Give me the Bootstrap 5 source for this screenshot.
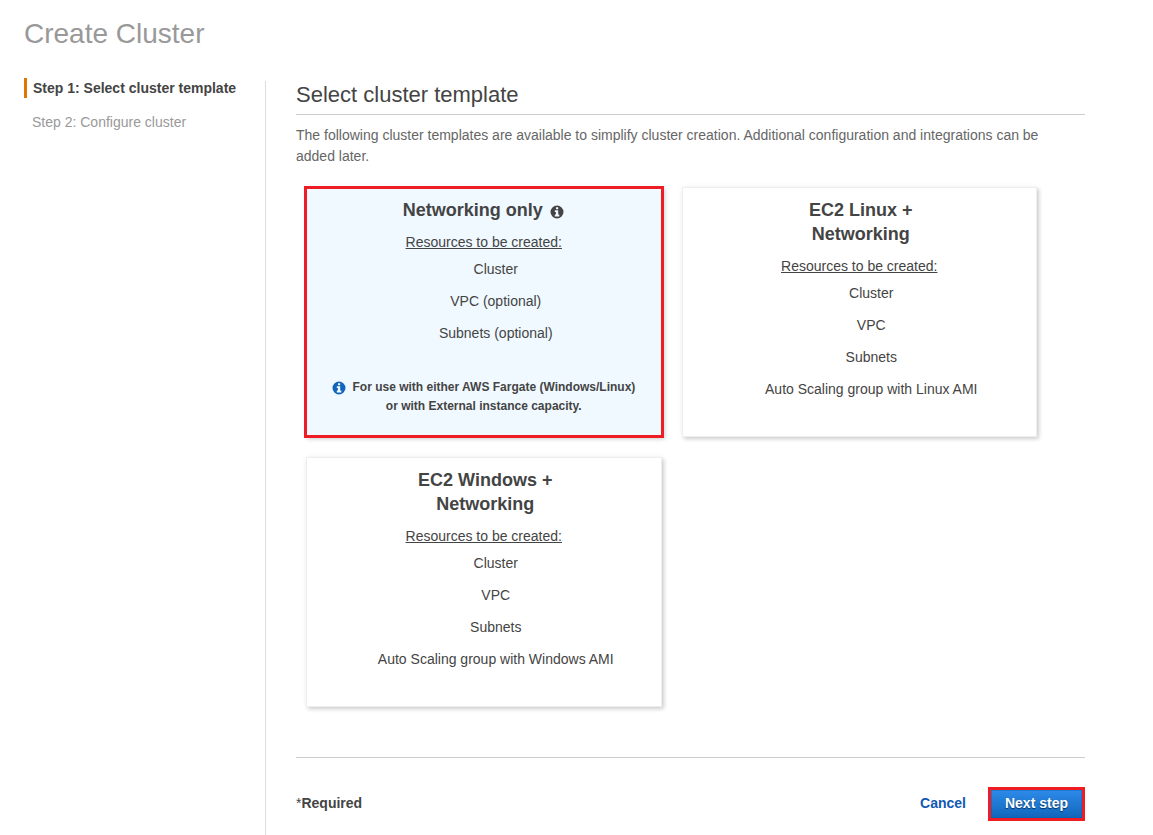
<!DOCTYPE html>
<html lang="en">
<head>
<meta charset="utf-8">
<meta name="viewport" content="width=device-width, initial-scale=1">
<title>Create Cluster</title>
<link href="https://cdn.jsdelivr.net/npm/bootstrap@5.3.0/dist/css/bootstrap.min.css" rel="stylesheet">
<style>
body { font-family: "Liberation Sans", Arial, sans-serif; font-size: 14px; line-height: 20px; color: #444; background: #fff; }
.page-title { font-size: 28px; line-height: 34px; color: #999; margin: 17px 24px 27px; font-weight: 400; }
.wizard { padding-left: 24px; }
.steps { width: 241px; flex: none; gap: 14px; }
.steps a { color: #999; text-decoration: none; padding-left: 8px; display: block; }
.steps a.current { color: #444; font-weight: 700; border-left: 3px solid #e07700; padding-left: 6px; }
.step-panel { border-left: 1px solid #ddd; margin-top: 3px; padding: 0 68px 14px 30px; }
.panel-title { font-size: 22px; line-height: 28px; font-weight: 400; margin: 0; padding-bottom: 5px; border-bottom: 1px solid #ccc; }
.intro { color: #666; line-height: 21px; margin: 10px 0 20px; padding-right: 20px; }
.templates { display: grid; grid-template-columns: 1fr 1fr; gap: 20px; padding: 0 48px 0 10px; }
.template { border: 1px solid #eee; min-height: 250px; padding: 10px 20px; box-shadow: 2px 2px 4px rgba(0,0,0,.18), 0 0 8px rgba(0,0,0,.04); cursor: pointer; background: #fff; }
.btn-check:checked + .template { background: #f0f9ff; border-color: #f0f9ff; outline: 3px solid #ee1c25; outline-offset: -2px; margin: 0 -1px; }
.template-name { font-size: 18px; line-height: 24px; font-weight: 700; padding-left: 3px; margin-bottom: 10px; }
.template-name .info { margin: 0 4px 0 2px; }
.template ul { margin: 1px 0 0; line-height: 32px; }
.template-note { font-size: 12px; line-height: 19px; font-weight: 700; margin-top: 29px; }
.info { width: 14px; height: 14px; vertical-align: -3px; }
.template-note .info { color: #1166bb; margin-right: 3px; vertical-align: -4px; }
.actions { border-top: 1px solid #ccc; margin-top: 50px; padding-top: 29px; font-weight: 700; gap: 22px; }
.actions > :not(button) { padding-bottom: 2px; }
.cancel { color: #1159b3; text-decoration: none; }
.next-step { border: 3px solid #ee1c25; border-radius: 0; padding: 3px 14px 5px; font-size: 14px; line-height: 20px; font-weight: 700; color: #fff; background: linear-gradient(#2d8bea, #1166bb) padding-box; text-shadow: 0 1px 1px #052f5a; box-shadow: inset 0 0 0 1px rgba(10,90,170,.35); }
.next-step:hover { color: #fff; background: #1166bb; border-color: #ee1c25; }
</style>
</head>
<body>
<svg class="d-none" xmlns="http://www.w3.org/2000/svg">
  <symbol id="info-circle" viewBox="0 0 14 14">
    <path fill="currentColor" fill-rule="evenodd" d="M7 .5a6.5 6.5 0 1 0 0 13 6.5 6.5 0 0 0 0-13ZM6 2.2h2.2v2H6ZM4.8 5.2h3.4v4.4h1.1v1.8H4.8V9.6h1.1V7H4.8Z"/>
  </symbol>
</svg>

<h1 class="page-title">Create Cluster</h1>

<div class="wizard d-flex">
  <nav class="steps d-flex flex-column" aria-label="Steps">
    <a class="current" href="#" aria-current="step">Step 1: Select cluster template</a>
    <a href="#">Step 2: Configure cluster</a>
  </nav>

  <main class="step-panel flex-grow-1">
    <h2 class="panel-title">Select cluster template</h2>
    <p class="intro">The following cluster templates are available to simplify cluster creation. Additional configuration and integrations can be added later.</p>

    <form>
      <div class="templates">
        <div class="d-grid">
          <input class="btn-check" type="radio" name="template" id="tpl-net" checked>
          <label class="template text-center" for="tpl-net">
            <div class="template-name">Networking only <svg class="info" aria-hidden="true"><use href="#info-circle"/></svg></div>
            <div class="text-decoration-underline">Resources to be created:</div>
            <ul class="list-unstyled ps-4">
              <li>Cluster</li>
              <li>VPC (optional)</li>
              <li>Subnets (optional)</li>
            </ul>
            <div class="template-note"><svg class="info" aria-hidden="true"><use href="#info-circle"/></svg> For use with either AWS Fargate (Windows/Linux)<br>or with External instance capacity.</div>
          </label>
        </div>
        <div class="d-grid">
          <input class="btn-check" type="radio" name="template" id="tpl-linux">
          <label class="template text-center" for="tpl-linux">
            <div class="template-name">EC2 Linux +<br>Networking</div>
            <div class="text-decoration-underline">Resources to be created:</div>
            <ul class="list-unstyled ps-4">
              <li>Cluster</li>
              <li>VPC</li>
              <li>Subnets</li>
              <li>Auto Scaling group with Linux AMI</li>
            </ul>
          </label>
        </div>
        <div class="d-grid">
          <input class="btn-check" type="radio" name="template" id="tpl-windows">
          <label class="template text-center" for="tpl-windows">
            <div class="template-name">EC2 Windows +<br>Networking</div>
            <div class="text-decoration-underline">Resources to be created:</div>
            <ul class="list-unstyled ps-4">
              <li>Cluster</li>
              <li>VPC</li>
              <li>Subnets</li>
              <li>Auto Scaling group with Windows AMI</li>
            </ul>
          </label>
        </div>
      </div>

      <div class="actions d-flex align-items-center">
        <div class="me-auto"><span class="fw-normal">*</span>Required</div>
        <a class="cancel" href="#">Cancel</a>
        <button class="btn next-step" type="button">Next step</button>
      </div>
    </form>
  </main>
</div>
<script src="https://cdn.jsdelivr.net/npm/bootstrap@5.3.0/dist/js/bootstrap.bundle.min.js"></script>
</body>
</html>
